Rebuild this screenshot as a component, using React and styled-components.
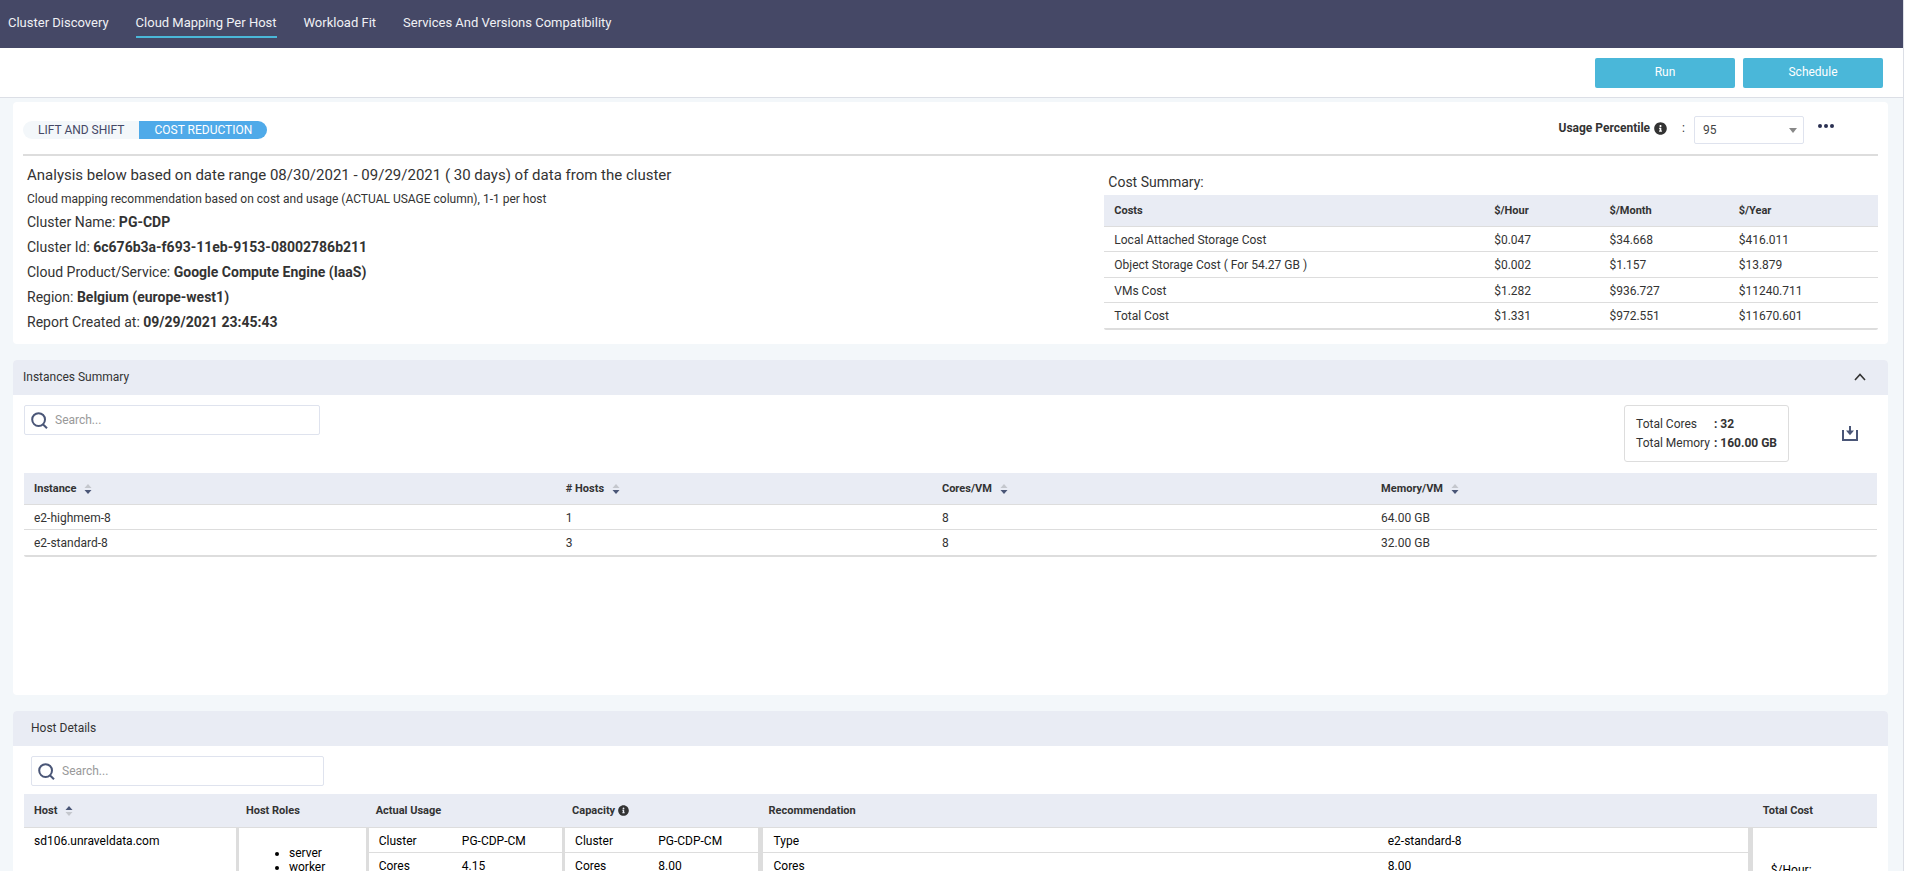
import { useState } from "react"
import styled, { createGlobalStyle } from "styled-components"
import { FaInfoCircle } from "react-icons/fa"

const GlobalStyle = createGlobalStyle`
  * { box-sizing: border-box; }
  body {
    margin: 0;
    background: #fff;
    font-family: Roboto, "Liberation Sans", sans-serif;
    font-size: 12px;
    color: #333;
  }
  button, input, select { font-family: inherit; color: inherit; }
  button { cursor: pointer; }
`

const Page = styled.div`
  height: 100vh;
  overflow: hidden;
  margin-right: 1px;
  border-right: 1px solid #dcdfe6;
  background: #f3f7fa;
`

const Nav = styled.nav`
  display: flex;
  align-items: flex-start;
  gap: 27px;
  height: 48px;
  padding: 8px 8px 0;
  background: #454866;
`

const NavLink = styled.a`
  height: 30px;
  line-height: 29px;
  font-size: 13px;
  color: #f0f1f5;
  text-decoration: none;
  white-space: nowrap;
  border-bottom: 2px solid ${({ $active }) => ($active ? "#4ab7d9" : "transparent")};
`

const Toolbar = styled.div`
  display: flex;
  justify-content: flex-end;
  align-items: flex-start;
  gap: 8px;
  height: 50px;
  padding: 10px 20px 0;
  background: #fff;
  border-bottom: 1px solid #dcdfe6;
`

const ActionButton = styled.button`
  width: 140px;
  height: 30px;
  padding: 0 0 2px;
  border: none;
  border-radius: 2px;
  background: #4ab7d9;
  color: #fff;
  font-size: 12px;
`

const Content = styled.main`
  display: flex;
  flex-direction: column;
  gap: 16px;
  padding: 4px 15px 0 13px;
`

const Card = styled.section`
  background: #fff;
  border-radius: 4px;
  min-height: ${({ $minHeight }) => $minHeight || 0}px;
`

const ReportHead = styled.div`
  display: flex;
  justify-content: space-between;
  height: 54px;
  margin: 0 10px;
  padding: 14px 44px 0 0;
  border-bottom: 2px solid #ddd;
`

const Segments = styled.div`
  display: flex;
  height: 18px;
  margin-top: 5px;
  border-radius: 9px;
  overflow: hidden;
`

const Segment = styled.button`
  padding: 0 15px;
  border: none;
  font-size: 12px;
  line-height: 18px;
  background: ${({ $active }) => ($active ? "#4faae9" : "#f3f7fa")};
  color: ${({ $active }) => ($active ? "#fff" : "#454866")};
`

const Percentile = styled.div`
  display: flex;
  align-items: flex-start;
  font-size: 12px;
  line-height: 24px;
`

const PercentileLabel = styled.label`
  display: flex;
  align-items: center;
  gap: 4px;
  font-weight: 700;
  color: #333;
`

const Colon = styled.span`
  padding: 0 9px 0 15px;
`

const SelectBox = styled.span`
  position: relative;
  display: block;

  svg {
    position: absolute;
    right: 7px;
    top: 12px;
    pointer-events: none;
  }
`

const Select = styled.select`
  display: block;
  appearance: none;
  width: 110px;
  height: 28px;
  padding: 0 8px;
  border: 1px solid #dfe3ee;
  border-radius: 2px;
  background: #fff;
  font-size: 12px;
  color: #444;
`

const IconButton = styled.button`
  display: flex;
  align-items: center;
  justify-content: center;
  padding: 0;
  border: none;
  background: none;
`

const MoreButton = styled(IconButton)`
  height: 20px;
  margin-left: 14px;
`

const ReportBody = styled.div`
  display: flex;
  justify-content: space-between;
  padding: 7px 10px 9px 14px;
`

const Facts = styled.div`
  display: flex;
  flex-direction: column;
  font-size: 14px;
  line-height: 25px;
`

const Fact = styled.p`
  margin: 0;
`

const FactLead = styled(Fact)`
  font-size: 15px;
`

const FactNote = styled(Fact)`
  font-size: 12px;
  line-height: 22px;
`

const CostPanel = styled.div`
  width: 41.8%;
  padding-top: 9px;
`

const CostTitle = styled.h3`
  margin: 0;
  padding-left: 4px;
  font-size: 14px;
  font-weight: 400;
  line-height: 20px;
  padding-bottom: 3px;
`

const Table = styled.table`
  width: 100%;
  table-layout: fixed;
  border-collapse: separate;
  border-spacing: 0;
  border-bottom: 2px solid #ddd;
  border-radius: 2px;
  font-size: 12px;
`

const Th = styled.th`
  width: ${({ $width }) => $width || "auto"};
  height: ${({ $tall }) => ($tall ? 34 : 32)}px;
  padding: 0 10px;
  border-bottom: 1px solid #ddd;
  background: #e9ecf4;
  text-align: left;
  font-size: 11px;
  font-weight: 700;
`

const ThInner = styled.span`
  display: flex;
  align-items: center;
  gap: ${({ $gap }) => $gap || 8}px;
`

const Row = styled.tr`
  height: 25px;

  &:nth-child(even) { height: 26px; }
  &:last-child { height: 25px; }
  &:last-child td { border-bottom: none; }
`

const Td = styled.td`
  padding: 1px 10px 0;
  border-bottom: 1px solid #ddd;
`

const SectionHead = styled.div`
  display: flex;
  align-items: center;
  justify-content: space-between;
  height: 35px;
  padding: 0 22px 1px ${({ $indent }) => $indent}px;
  border-radius: 4px 4px 0 0;
  background: #e9ecf4;
`

const SectionTitle = styled.h2`
  margin: 0;
  font-size: 12px;
  font-weight: 400;
`

const Tools = styled.div`
  display: flex;
  justify-content: space-between;
  align-items: flex-start;
  padding: 10px 30px ${({ $bottom }) => $bottom}px ${({ $indent }) => $indent}px;
`

const SearchBox = styled.label`
  display: flex;
  align-items: center;
  gap: 7px;
  width: ${({ $width }) => $width}px;
  height: 30px;
  padding: 0 6px;
  border: 1px solid #dfe3ee;
  border-radius: 2px;
`

const SearchInput = styled.input`
  flex: 1;
  min-width: 0;
  padding: 0;
  border: none;
  outline: none;
  font-size: 12px;

  &::placeholder { color: #999; }
`

const ToolsRight = styled.div`
  display: flex;
  align-items: center;
  gap: 53px;
`

const Totals = styled.dl`
  display: grid;
  grid-template-columns: auto auto;
  column-gap: 4px;
  margin: 0;
  padding: 9px 11px 8px;
  border: 1px solid #ddd;
  border-radius: 3px;
  line-height: 19px;

  dt, dd { margin: 0; }
  dd { font-weight: 700; }
`

const TableWrap = styled.div`
  padding: 0 11px;
`

const HostTd = styled.td`
  padding: ${({ $pad }) => $pad || "0"};
  border-left: ${({ $left }) => $left || 0}px solid #ddd;
  border-right: ${({ $right }) => $right || 0}px solid #ddd;
  vertical-align: top;
  color: #000;
`

const Roles = styled.ul`
  margin: 18px 0 0;
  padding-left: 50px;
  line-height: 14px;
`

const MetricTable = styled.table`
  width: 100%;
  table-layout: fixed;
  border-collapse: separate;
  border-spacing: 0;
  color: #000;

  td {
    height: 25px;
    padding: 2px 10px 0;
    border-bottom: 1px solid #ddd;
  }
  td:first-child { width: ${({ $first }) => $first}; }
`

const SearchIcon = () => (
  <svg width="17" height="17" viewBox="0 0 17 17" fill="none" stroke="#4a5677" strokeWidth="2" aria-hidden="true">
    <circle cx="7.6" cy="7.6" r="6.4" />
    <path d="M11.6 12 L16 16.2" />
  </svg>
)

const SortIcon = ({ dir }) => (
  <svg width="8" height="10" viewBox="0 0 8 10" aria-hidden="true">
    <path d="M0.5 4 L4 0 L7.5 4 Z" fill={dir === "asc" ? "#4a5677" : "#c4c7cd"} />
    <path d="M0.5 6 L4 10 L7.5 6 Z" fill={dir === "asc" ? "#c4c7cd" : "#4a5677"} />
  </svg>
)

const DownloadIcon = () => (
  <svg width="16" height="16" viewBox="0 0 16 16" fill="none" stroke="#4a5677" strokeWidth="2" aria-hidden="true">
    <path d="M1 4 V14 H15 V4" />
    <path d="M8 0 V7" />
    <path d="M4 4.6 H12 L8 9.2 Z" fill="#4a5677" stroke="none" />
  </svg>
)

const ChevronUp = () => (
  <svg width="12" height="8" viewBox="0 0 12 8" fill="none" stroke="#333" strokeWidth="1.6" aria-hidden="true">
    <path d="M1 7 L6 1.5 L11 7" />
  </svg>
)

const Dots = () => (
  <svg width="16" height="4" viewBox="0 0 16 4" fill="#2b3052" aria-hidden="true">
    <circle cx="2" cy="2" r="2" />
    <circle cx="8" cy="2" r="2" />
    <circle cx="14" cy="2" r="2" />
  </svg>
)

const tabs = ["Cluster Discovery", "Cloud Mapping Per Host", "Workload Fit", "Services And Versions Compatibility"]

const costs = [
  ["Local Attached Storage Cost", "$0.047", "$34.668", "$416.011"],
  ["Object Storage Cost ( For 54.27 GB )", "$0.002", "$1.157", "$13.879"],
  ["VMs Cost", "$1.282", "$936.727", "$11240.711"],
  ["Total Cost", "$1.331", "$972.551", "$11670.601"],
]

const instances = [
  ["e2-highmem-8", "1", "8", "64.00 GB"],
  ["e2-standard-8", "3", "8", "32.00 GB"],
]

const facts = [
  ["Cluster Name", "PG-CDP"],
  ["Cluster Id", "6c676b3a-f693-11eb-9153-08002786b211"],
  ["Cloud Product/Service", "Google Compute Engine (IaaS)"],
  ["Region", "Belgium (europe-west1)"],
  ["Report Created at", "09/29/2021 23:45:43"],
]

const Rows = ({ data }) => (
  <tbody>
    {data.map((row) => (
      <Row key={row[0]}>
        {row.map((cell, i) => <Td key={i}>{cell}</Td>)}
      </Row>
    ))}
  </tbody>
)

const SortTh = ({ width, dir, tall, children }) => (
  <Th $width={width} $tall={tall} scope="col">
    <ThInner>
      {children}
      <IconButton aria-label={`Sort by ${children}`}><SortIcon dir={dir} /></IconButton>
    </ThInner>
  </Th>
)

const Metrics = ({ first, rows }) => (
  <MetricTable $first={first}>
    <tbody>
      {rows.map(([name, value]) => (
        <tr key={name}><td>{name}</td><td>{value}</td></tr>
      ))}
    </tbody>
  </MetricTable>
)

const Search = ({ width, label }) => {
  const [value, setValue] = useState("")
  return (
    <SearchBox $width={width}>
      <SearchIcon />
      <SearchInput aria-label={label} placeholder="Search..." value={value} onChange={(e) => setValue(e.target.value)} />
    </SearchBox>
  )
}

export default function App() {
  const [mode, setMode] = useState("COST REDUCTION")
  const [percentile, setPercentile] = useState("95")

  return (
    <Page>
      <GlobalStyle />
      <Nav>
        {tabs.map((tab) => (
          <NavLink key={tab} href="#" $active={tab === "Cloud Mapping Per Host"}>{tab}</NavLink>
        ))}
      </Nav>
      <Toolbar>
        <ActionButton>Run</ActionButton>
        <ActionButton>Schedule</ActionButton>
      </Toolbar>
      <Content>
        <Card>
          <ReportHead>
            <Segments>
              {["LIFT AND SHIFT", "COST REDUCTION"].map((name) => (
                <Segment key={name} $active={mode === name} onClick={() => setMode(name)}>{name}</Segment>
              ))}
            </Segments>
            <Percentile>
              <PercentileLabel htmlFor="percentile">Usage Percentile <FaInfoCircle size={13} /></PercentileLabel>
              <Colon>:</Colon>
              <SelectBox>
                <Select id="percentile" value={percentile} onChange={(e) => setPercentile(e.target.value)}>
                  <option>90</option>
                  <option>95</option>
                  <option>99</option>
                </Select>
                <svg width="8" height="5" viewBox="0 0 8 5" aria-hidden="true"><path d="M0 0 H8 L4 5 Z" fill="#888" /></svg>
              </SelectBox>
              <MoreButton aria-label="More"><Dots /></MoreButton>
            </Percentile>
          </ReportHead>
          <ReportBody>
            <Facts>
              <FactLead>Analysis below based on date range 08/30/2021 - 09/29/2021 ( 30 days) of data from the cluster</FactLead>
              <FactNote>Cloud mapping recommendation based on cost and usage (ACTUAL USAGE column), 1-1 per host</FactNote>
              {facts.map(([name, value]) => (
                <Fact key={name}>{name}: <b>{value}</b></Fact>
              ))}
            </Facts>
            <CostPanel>
              <CostTitle>Cost Summary:</CostTitle>
              <Table>
                <thead>
                  <tr>
                    <Th $width="49.1%" scope="col">Costs</Th>
                    <Th $width="14.9%" scope="col">$/Hour</Th>
                    <Th $width="16.7%" scope="col">$/Month</Th>
                    <Th scope="col">$/Year</Th>
                  </tr>
                </thead>
                <Rows data={costs} />
              </Table>
            </CostPanel>
          </ReportBody>
        </Card>

        <Card $minHeight={335}>
          <SectionHead $indent={10}>
            <SectionTitle>Instances Summary</SectionTitle>
            <IconButton aria-label="Collapse"><ChevronUp /></IconButton>
          </SectionHead>
          <Tools $indent={11} $bottom={11}>
            <Search width={296} label="Search instances" />
            <ToolsRight>
              <Totals>
                <dt>Total Cores</dt>
                <dd>: 32</dd>
                <dt>Total Memory</dt>
                <dd>: 160.00 GB</dd>
              </Totals>
              <IconButton aria-label="Download"><DownloadIcon /></IconButton>
            </ToolsRight>
          </Tools>
          <TableWrap>
            <Table>
              <thead>
                <tr>
                  <SortTh width="28.7%">Instance</SortTh>
                  <SortTh width="20.3%"># Hosts</SortTh>
                  <SortTh width="23.7%">Cores/VM</SortTh>
                  <SortTh>Memory/VM</SortTh>
                </tr>
              </thead>
              <Rows data={instances} />
            </Table>
          </TableWrap>
        </Card>

        <Card>
          <SectionHead $indent={18}>
            <SectionTitle>Host Details</SectionTitle>
          </SectionHead>
          <Tools $indent={18} $bottom={8}>
            <Search width={293} label="Search hosts" />
          </Tools>
          <TableWrap>
            <Table>
              <thead>
                <tr>
                  <SortTh width="11.44%" dir="asc" tall>Host</SortTh>
                  <Th $tall $width="7%" scope="col">Host Roles</Th>
                  <Th $tall $width="10.6%" scope="col">Actual Usage</Th>
                  <Th $tall $width="10.6%" scope="col">
                    <ThInner $gap={3}>Capacity <FaInfoCircle size={11} /></ThInner>
                  </Th>
                  <Th $tall scope="col">Recommendation</Th>
                  <Th $tall $width="6.7%" scope="col">Total Cost</Th>
                </tr>
              </thead>
              <tbody>
                <tr>
                  <HostTd $pad="6px 10px">sd106.unraveldata.com</HostTd>
                  <HostTd $left={3}>
                    <Roles>
                      <li>server</li>
                      <li>worker</li>
                    </Roles>
                  </HostTd>
                  <HostTd $left={3}>
                    <Metrics first="43%" rows={[["Cluster", "PG-CDP-CM"], ["Cores", "4.15"]]} />
                  </HostTd>
                  <HostTd $left={3}>
                    <Metrics first="43%" rows={[["Cluster", "PG-CDP-CM"], ["Cores", "8.00"]]} />
                  </HostTd>
                  <HostTd $left={5} $right={5}>
                    <Metrics first="62.4%" rows={[["Type", "e2-standard-8"], ["Cores", "8.00"]]} />
                  </HostTd>
                  <HostTd $pad="35px 18px 0">$/Hour:</HostTd>
                </tr>
              </tbody>
            </Table>
          </TableWrap>
        </Card>
      </Content>
    </Page>
  )
}
